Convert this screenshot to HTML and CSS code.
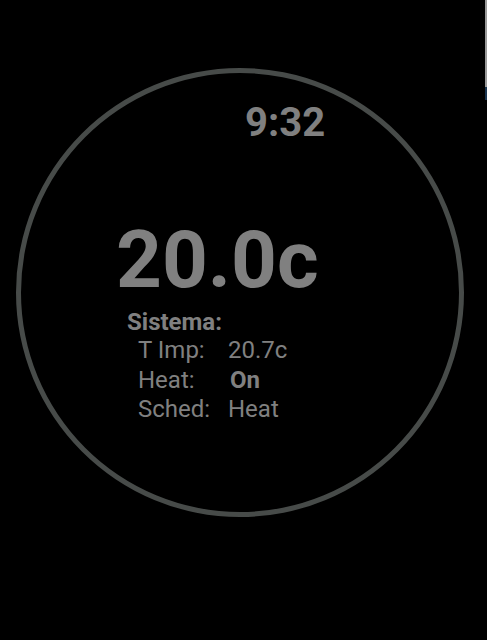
FILE: index.html
```html
<!DOCTYPE html>
<html>
<head>
<meta charset="utf-8">
<link rel="stylesheet" href="styles.css">
</head>
<body>
<div class="screen">
  <div class="dial">
    <div class="time">9:32</div>
    <div class="temp">20.0c</div>
    <div class="section">Sistema:</div>
    <div class="rows">
      <span class="label">T Imp:</span><span class="value">20.7c</span>
      <span class="label">Heat:</span><span class="value on">On</span>
      <span class="label">Sched:</span><span class="value">Heat</span>
    </div>
  </div>
  <div class="edge"><div class="edge-gray"></div><div class="edge-blue"></div></div>
</div>
</body>
</html>
```
FILE: styles.css
```css
html, body {
  margin: 0;
  padding: 0;
  background: #000;
}
.screen {
  position: relative;
  width: 487px;
  height: 640px;
  overflow: hidden;
  background: #000;
  font-family: Roboto, "Liberation Sans", sans-serif;
  color: #808080;
  padding-top: 68px;
  padding-left: 16px;
  box-sizing: border-box;
}
.dial {
  width: 448px;
  height: 449px;
  box-sizing: border-box;
  border: 5px solid #474b49;
  border-radius: 50%;
  padding-top: 30px;
}
.time {
  font-size: 40px;
  font-weight: 700;
  line-height: 40px;
  padding-left: 224px;
}
.temp {
  margin-top: 77px;
  font-size: 80px;
  font-weight: 700;
  line-height: 80px;
  padding-left: 95px;
}
.section {
  margin-top: 8px;
  font-size: 24px;
  font-weight: 700;
  line-height: 29px;
  padding-left: 106px;
}
.rows {
  display: grid;
  grid-template-columns: 90px auto;
  font-size: 24px;
  line-height: 29.5px;
  padding-left: 117px;
  margin-top: -1px;
}
.on {
  font-weight: 700;
  padding-left: 2px;
}
.edge {
  position: absolute;
  top: 0;
  left: 485px;
  width: 2px;
}
.edge-gray {
  height: 87px;
  background: #9a9a9a;
}
.edge-blue {
  height: 13px;
  background: #1a3550;
}
```
